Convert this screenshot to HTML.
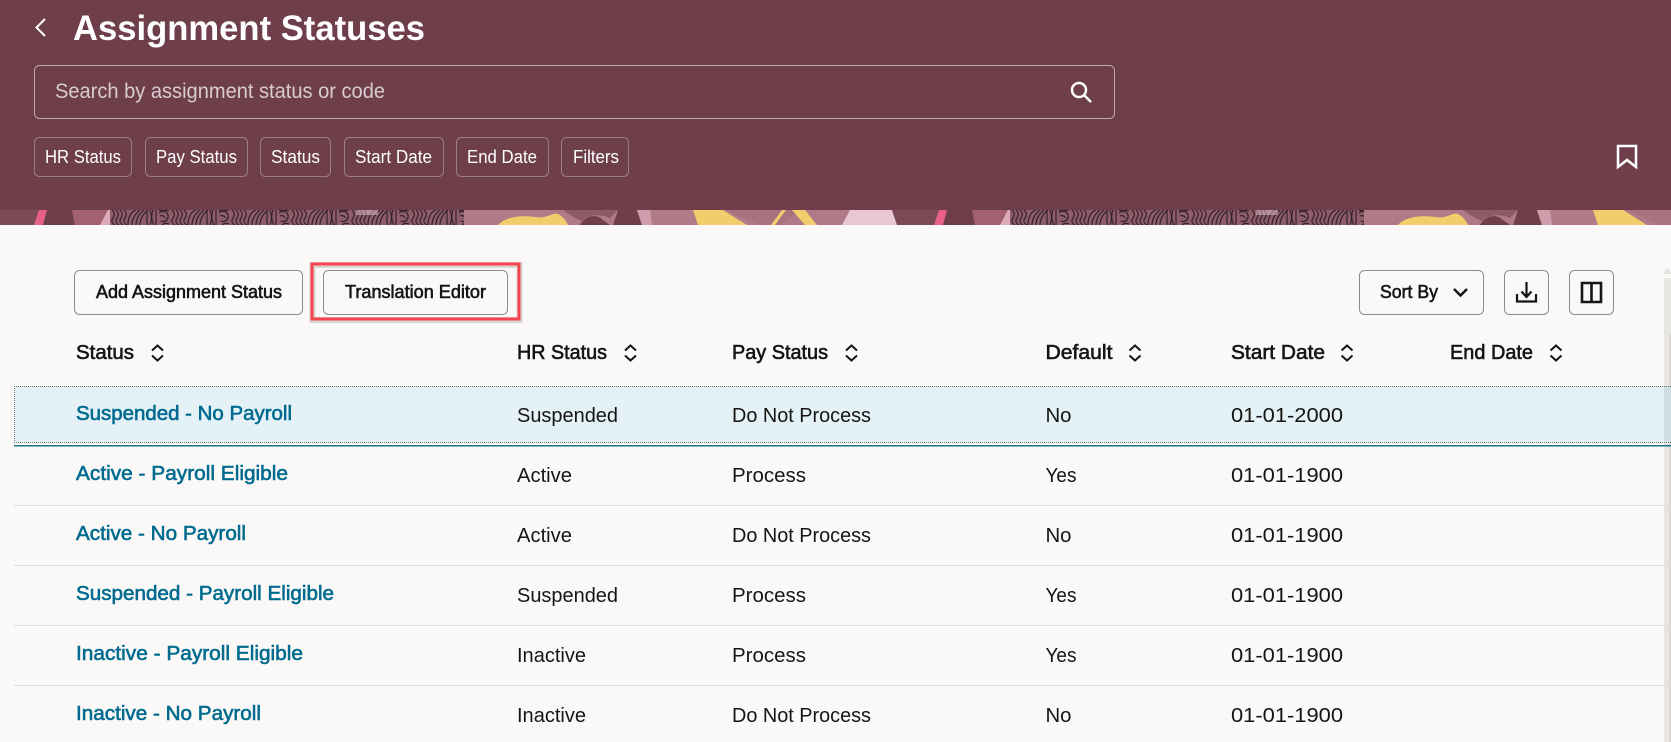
<!DOCTYPE html>
<html lang="en"><head><meta charset="utf-8"><title>Assignment Statuses</title>
<style>
html,body{margin:0;padding:0;background:#fbf9f8;width:1671px;height:742px;overflow:hidden}
svg{display:block}
text{font-family:"Liberation Sans",sans-serif}
.s{font-weight:400;stroke:currentColor;stroke-width:.6px}
.h{font-size:20.5px;fill:#161513;color:#161513}
.l{font-size:20.5px;fill:#006b8f;color:#006b8f}
.b{font-size:20px;fill:#161513}
.btn{font-size:18.5px;fill:#161513;color:#161513}
.chip{font-size:18px;fill:#fff}
</style></head><body>
<svg xmlns="http://www.w3.org/2000/svg" width="1671" height="742" viewBox="0 0 1671 742">
<defs>
<pattern id="fp" width="60" height="15" patternUnits="userSpaceOnUse" x="110" y="210">
<rect width="60" height="15" fill="#8f5c6a"/>
<g fill="none" stroke="#33202a" stroke-width="1.200">
<path d="M2 0q4 4 1 8t2 7M6 0q4 4 1 8t2 7M10 0q4 4 1 8t2 7M14 0q4 4 1 8t2 7"/>
<path d="M18 15c0-8 3-13 8-15M22 15c0-6 3-11 8-15M26 15c0-6 3-11 8-15M30 15c0-6 3-11 8-15"/>
<path d="M37 0v15M40 0q3 8 0 15M43 0q-3 8 1 15M46 0v15"/>
<path d="M49 3c3-3 8-2 9 2s-3 8-7 6M50 6c2-1 5 0 5 2M52 15c2-2 5-2 7-1M49 0c3 1 6 1 10 0"/>
</g></pattern>
<g id="tile">
<rect x="0" y="210" width="900" height="15" fill="#b07a88"/>
<rect x="0" y="210" width="40" height="15" fill="#7a4a56"/>
<polygon points="39,210 47,210 43,225 34,225" fill="#e8608a"/>
<polygon points="47,210 72,210 75,225 43,225" fill="#6e3f4a"/>
<polygon points="72,210 108,210 100,225 75,225" fill="#a36072"/>
<polygon points="108,210 112,210 112,225 100,225" fill="#dcaab8"/>
<rect x="110" y="210" width="354" height="15" fill="url(#fp)"/>
<rect x="356" y="210" width="22" height="5" fill="#d8b8c2" opacity=".55"/>
<path d="M563 210H618L610 218C600 214 590 214 582 221C575 218 568 214 563 210Z" fill="#8f5a68"/>
<path d="M498 225C505 217 520 215 535 217C548 219 552 212 558 214C562 216 566 220 568 225Z" fill="#f2cd6c"/>
<path d="M580 225C585 216 596 213 603 220L610 225Z" fill="#6e3f4a"/>
<polygon points="618,210 637,210 642,225 613,225" fill="#6e3f4a"/>
<polygon points="637,210 650,210 652,225 642,225 " fill="#cf9dac"/>
<polygon points="693,210 723,210 747,225 698,225" fill="#f2cd6c"/>
<polygon points="726,210 800,210 780,225 760,225" fill="#a5697a" opacity=".55"/>
<polygon points="782,210 786,210 775,225 771,225" fill="#f2cd6c"/>
<polygon points="792,210 805,210 817,225 805,225" fill="#f2cd6c"/>
<polygon points="850,210 892,210 897,225 842,225" fill="#e9c7d2"/>
<polygon points="892,210 900,210 900,225 897,225" fill="#7a4a56"/>
</g>
</defs>
<rect width="1671" height="742" fill="#fbf9f8"/>
<rect width="1671" height="210" fill="#6e3f4a"/>
<use href="#tile"/><use href="#tile" x="900"/>

<path d="M45 19L36.500 27.500L45 36" fill="none" stroke="#fff" stroke-width="2"/>
<text x="73" y="40" font-size="35" font-weight="700" fill="#fff" textLength="352" lengthAdjust="spacingAndGlyphs">Assignment Statuses</text>

<rect x="34.500" y="65.500" width="1080" height="53" rx="5" fill="none" stroke="#bfa6ad"/>
<text x="55" y="98" font-size="21" fill="#d9cbcf" textLength="330" lengthAdjust="spacingAndGlyphs">Search by assignment status or code</text>
<circle cx="1079" cy="90" r="7" fill="none" stroke="#fff" stroke-width="2.500"/>
<path d="M1084.500 95.500L1091 102" stroke="#fff" stroke-width="2.500" fill="none"/>

<g fill="none" stroke="#9c7d86">
<rect x="34.500" y="137.500" width="97" height="39" rx="5"/>
<rect x="145.500" y="137.500" width="102" height="39" rx="5"/>
<rect x="260.500" y="137.500" width="70" height="39" rx="5"/>
<rect x="344.500" y="137.500" width="99" height="39" rx="5"/>
<rect x="456.500" y="137.500" width="92" height="39" rx="5"/>
<rect x="561.500" y="137.500" width="67" height="39" rx="5"/>
</g>
<text class="chip" x="45" y="163" textLength="76" lengthAdjust="spacingAndGlyphs">HR Status</text>
<text class="chip" x="156" y="163" textLength="81" lengthAdjust="spacingAndGlyphs">Pay Status</text>
<text class="chip" x="271" y="163" textLength="49" lengthAdjust="spacingAndGlyphs">Status</text>
<text class="chip" x="355" y="163" textLength="77" lengthAdjust="spacingAndGlyphs">Start Date</text>
<text class="chip" x="467" y="163" textLength="70" lengthAdjust="spacingAndGlyphs">End Date</text>
<text class="chip" x="573" y="163" textLength="46" lengthAdjust="spacingAndGlyphs">Filters</text>

<path d="M1618 146H1636V167L1627 160L1618 167Z" fill="none" stroke="#fff" stroke-width="2.500"/>

<!-- scrollbar -->
<rect x="1664" y="278" width="7" height="464" fill="#e8e6e3"/>
<rect x="1669" y="333" width="2" height="409" fill="#d9d6d3"/>
<path d="M1663 274L1667.500 268L1672 274Z" fill="#e4e2df"/>

<!-- toolbar -->
<g fill="#fbf9f8" stroke="#8f8c89">
<rect x="74.500" y="270.500" width="228" height="44" rx="5"/>
<rect x="323.500" y="270.500" width="184" height="44" rx="5"/>
<rect x="1359.500" y="270.500" width="124" height="44" rx="5"/>
<rect x="1504.500" y="270.500" width="44" height="44" rx="5"/>
<rect x="1569.500" y="270.500" width="44" height="44" rx="5"/>
</g>
<rect x="312.500" y="265" width="207" height="55" fill="none" stroke="#aaa" stroke-width="6" opacity=".45"/>
<rect x="312" y="264" width="207" height="55" fill="none" stroke="#f4444c" stroke-width="3"/>
<text class="btn s" x="96" y="298" textLength="186" lengthAdjust="spacingAndGlyphs">Add Assignment Status</text>
<text class="btn s" x="345" y="298" textLength="141" lengthAdjust="spacingAndGlyphs">Translation Editor</text>
<text class="btn s" x="1380" y="298" textLength="58" lengthAdjust="spacingAndGlyphs">Sort By</text>
<path d="M1454 289L1460.500 295.500L1467 289" fill="none" stroke="#161513" stroke-width="2.500"/>
<path d="M1526.500 282V297M1521.500 291.500L1526.500 297L1531.500 291.500M1517 294V301.500H1536V294" fill="none" stroke="#161513" stroke-width="2.200"/>
<path d="M1582 283H1601V302H1582ZM1591.500 283V302" fill="none" stroke="#161513" stroke-width="2.600"/>

<!-- table header -->
<text class="h s" x="76" y="359" textLength="58" lengthAdjust="spacingAndGlyphs">Status</text>
<text class="h s" x="517" y="359" textLength="90" lengthAdjust="spacingAndGlyphs">HR Status</text>
<text class="h s" x="732" y="359" textLength="96" lengthAdjust="spacingAndGlyphs">Pay Status</text>
<text class="h s" x="1045.500" y="359" textLength="67" lengthAdjust="spacingAndGlyphs">Default</text>
<text class="h s" x="1231" y="359" textLength="94" lengthAdjust="spacingAndGlyphs">Start Date</text>
<text class="h s" x="1450" y="359" textLength="83" lengthAdjust="spacingAndGlyphs">End Date</text>
<g fill="none" stroke="#161513" stroke-width="2">
<path d="M152 350.500L157.500 345.500L163 350.500M152 355.500L157.500 360.500L163 355.500"/>
<path d="M625 350.500L630.500 345.500L636 350.500M625 355.500L630.500 360.500L636 355.500"/>
<path d="M846 350.500L851.500 345.500L857 350.500M846 355.500L851.500 360.500L857 355.500"/>
<path d="M1129.500 350.500L1135 345.500L1140.500 350.500M1129.500 355.500L1135 360.500L1140.500 355.500"/>
<path d="M1341.500 350.500L1347 345.500L1352.500 350.500M1341.500 355.500L1347 360.500L1352.500 355.500"/>
<path d="M1550.500 350.500L1556 345.500L1561.500 350.500M1550.500 355.500L1556 360.500L1561.500 355.500"/>
</g>

<!-- selected row -->
<rect x="14" y="386" width="1657" height="56" fill="#e4f1f7"/>
<rect x="1664" y="386" width="7" height="56" fill="#cfdde4"/>
<path d="M14 386.500H1671M14 442.500H1671M14.500 386V442" fill="none" stroke="#6f7378" stroke-dasharray="1 1"/>
<rect x="14" y="445" width="1657" height="1.500" fill="#1f6f8f"/>
<g fill="#dedbd8">
<rect x="14" y="505" width="1657" height="1"/>
<rect x="14" y="565" width="1657" height="1"/>
<rect x="14" y="625" width="1657" height="1"/>
<rect x="14" y="685" width="1657" height="1"/>
</g>

<!-- rows -->
<text class="l s" x="76" y="420" textLength="216" lengthAdjust="spacingAndGlyphs">Suspended - No Payroll</text>
<text class="b" x="517" y="422" textLength="101" lengthAdjust="spacingAndGlyphs">Suspended</text>
<text class="b" x="732" y="422" textLength="139" lengthAdjust="spacingAndGlyphs">Do Not Process</text>
<text class="b" x="1045.500" y="422" textLength="26" lengthAdjust="spacingAndGlyphs">No</text>
<text class="b" x="1231" y="422" textLength="112" lengthAdjust="spacingAndGlyphs">01-01-2000</text>

<text class="l s" x="76" y="480" textLength="212" lengthAdjust="spacingAndGlyphs">Active - Payroll Eligible</text>
<text class="b" x="517" y="482" textLength="55" lengthAdjust="spacingAndGlyphs">Active</text>
<text class="b" x="732" y="482" textLength="74" lengthAdjust="spacingAndGlyphs">Process</text>
<text class="b" x="1045.500" y="482" textLength="31" lengthAdjust="spacingAndGlyphs">Yes</text>
<text class="b" x="1231" y="482" textLength="112" lengthAdjust="spacingAndGlyphs">01-01-1900</text>

<text class="l s" x="76" y="540" textLength="170" lengthAdjust="spacingAndGlyphs">Active - No Payroll</text>
<text class="b" x="517" y="542" textLength="55" lengthAdjust="spacingAndGlyphs">Active</text>
<text class="b" x="732" y="542" textLength="139" lengthAdjust="spacingAndGlyphs">Do Not Process</text>
<text class="b" x="1045.500" y="542" textLength="26" lengthAdjust="spacingAndGlyphs">No</text>
<text class="b" x="1231" y="542" textLength="112" lengthAdjust="spacingAndGlyphs">01-01-1900</text>

<text class="l s" x="76" y="600" textLength="258" lengthAdjust="spacingAndGlyphs">Suspended - Payroll Eligible</text>
<text class="b" x="517" y="602" textLength="101" lengthAdjust="spacingAndGlyphs">Suspended</text>
<text class="b" x="732" y="602" textLength="74" lengthAdjust="spacingAndGlyphs">Process</text>
<text class="b" x="1045.500" y="602" textLength="31" lengthAdjust="spacingAndGlyphs">Yes</text>
<text class="b" x="1231" y="602" textLength="112" lengthAdjust="spacingAndGlyphs">01-01-1900</text>

<text class="l s" x="76" y="660" textLength="227" lengthAdjust="spacingAndGlyphs">Inactive - Payroll Eligible</text>
<text class="b" x="517" y="662" textLength="69" lengthAdjust="spacingAndGlyphs">Inactive</text>
<text class="b" x="732" y="662" textLength="74" lengthAdjust="spacingAndGlyphs">Process</text>
<text class="b" x="1045.500" y="662" textLength="31" lengthAdjust="spacingAndGlyphs">Yes</text>
<text class="b" x="1231" y="662" textLength="112" lengthAdjust="spacingAndGlyphs">01-01-1900</text>

<text class="l s" x="76" y="720" textLength="185" lengthAdjust="spacingAndGlyphs">Inactive - No Payroll</text>
<text class="b" x="517" y="722" textLength="69" lengthAdjust="spacingAndGlyphs">Inactive</text>
<text class="b" x="732" y="722" textLength="139" lengthAdjust="spacingAndGlyphs">Do Not Process</text>
<text class="b" x="1045.500" y="722" textLength="26" lengthAdjust="spacingAndGlyphs">No</text>
<text class="b" x="1231" y="722" textLength="112" lengthAdjust="spacingAndGlyphs">01-01-1900</text>
</svg>
</body></html>
